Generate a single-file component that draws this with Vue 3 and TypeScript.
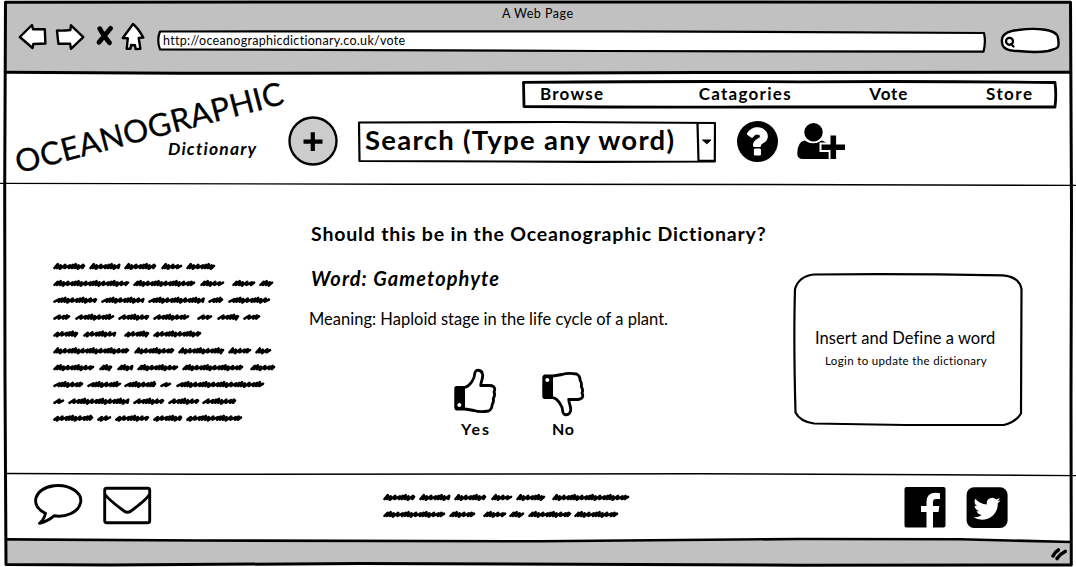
<script setup lang="ts">
// Spreads the letters of a line so that it fills the given width in pixels.
const vFit = {
  mounted(el: HTMLElement, binding: { value: number }) {
    const count = (el.textContent ?? '').length
    const natural = el.getBoundingClientRect().width
    el.style.letterSpacing = `${(binding.value - natural) / Math.max(1, count - 1)}px`
    el.style.width = `${binding.value}px`
  },
}

type Word = [number, number]

const nav = [
  { label: 'Browse', width: 63 },
  { label: 'Catagories', width: 92 },
  { label: 'Vote', width: 38 },
  { label: 'Store', width: 46 },
]

const sideLines: Word[][] = [
  [[1, 32], [37, 67], [72, 103], [109, 129], [134, 162]],
  [[1, 76], [81, 142], [148, 171], [180, 202], [207, 220]],
  [[1, 44], [49, 91], [96, 151], [156, 170], [176, 217]],
  [[1, 17], [23, 61], [66, 96], [101, 136], [145, 159], [165, 186], [191, 207]],
  [[1, 25], [31, 63], [72, 96], [101, 148]],
  [[1, 76], [82, 121], [126, 171], [176, 198], [203, 218]],
  [[1, 41], [47, 59], [65, 80], [85, 125], [130, 190], [198, 222]],
  [[1, 30], [35, 68], [72, 103], [108, 118], [124, 211]],
  [[1, 11], [16, 76], [81, 111], [116, 146], [150, 183]],
  [[1, 40], [45, 58], [63, 96], [101, 129], [134, 189]],
]

const footLines: Word[][] = [
  [[1, 32], [37, 67], [72, 103], [109, 129], [134, 162], [170, 246]],
  [[1, 62], [67, 92], [101, 123], [127, 141], [146, 188], [192, 235]],
]

function scribble(words: Word[], row: number): string {
  const y = 7.4 + row * 16.85
  let d = ''
  words.forEach(([from, to], w) => {
    let x = from + 0.5
    let i = 0
    d += `M${x} ${y + 1.6}`
    while (x < to - 5) {
      const k = (i * 7 + w * 5 + row * 3) % 5
      const rise = k === 0 ? 2.2 : k < 3 ? 1 : 1.5
      const run = k === 4 || k === 1 ? 5 : 3.3
      d += `L${(x + run).toFixed(1)} ${(y - rise).toFixed(1)}`
      d += `L${(x + run - 0.8).toFixed(1)} ${(y + (k === 2 ? 2.4 : 1.6)).toFixed(1)}`
      x += run - 0.4
      i++
    }
    d += `L${to - 1} ${y - 0.6}`
  })
  return d
}
</script>

<template>
  <div class="window">
    <div class="browser">
      <div class="title"><span v-fit="71">A Web Page</span></div>
      <div class="toolbar">
        <svg class="buttons" width="130" height="32" viewBox="17 21 130 32">
          <g class="outlined">
            <path d="M19.8 37L32 25L33 29.2L44.8 29.3L45.4 43.5L33.3 44L32.5 48Z" />
            <path d="M57 30.5Q63 31 70.3 30L71 25.3L83.3 37.2L71 48.8L70 43.6L58.4 43.8Z" />
            <path d="M133 24Q138 28 143.3 37.5L138.7 38L140.4 48.7L135.6 49L135 45.3L131 45L130.5 48.8L126.7 48.8L127.8 38.2L122.8 38Z" />
          </g>
          <path class="cross" d="M99.8 28.7Q103 35 109.5 42.8M110.6 28.3Q105 35 99 42.300" />
        </svg>
        <div class="address">
          <svg class="shape" width="832" height="25" viewBox="156 29 832 25">
            <path d="M160 31.5Q400 32 620 31.3L984 33Q986 42 983.5 51.7L600 51Q400 50 160 49.3Q156.500 40 160 31.5Z" />
          </svg>
          <span v-fit="242">http://oceanographicdictionary.co.uk/vote</span>
        </div>
        <svg class="quick" width="62" height="28" viewBox="999 27 62 28">
          <path class="pill" d="M1002 42C1001 35 1007 31 1018 30C1033 28 1057 28 1058 38C1060 50 1057 48 1048 51C1036 53 1029 52 1018 51C1007 51 1002 48 1002 42Z" />
          <circle class="lens" cx="1009.5" cy="41.300" r="3.5" />
          <path class="lens" d="M1011 44L1013.500 46.500" />
        </svg>
      </div>
    </div>

    <header class="header">
      <div class="brand">
        <svg class="brand-art" width="288" height="108" viewBox="0 75 288 108">
          <text class="brand-name" transform="translate(18.500 173.500) rotate(-14.7)" x="0" y="0" textLength="276">OCEANOGRAPHIC</text>
        </svg>
        <span class="brand-sub" v-fit="88">Dictionary</span>
      </div>
      <div class="header-side">
        <nav class="nav">
          <svg class="shape" width="536" height="30" viewBox="522 79 536 30">
            <path class="thick" d="M523.500 82.300Q700 81 800 81.800Q930 81 1055 82.500Q1056.500 95 1055 107L760 107Q640 107.500 524 106.500Z" />
          </svg>
          <a v-for="item in nav" :key="item.label" v-fit="item.width">{{ item.label }}</a>
        </nav>
        <div class="tools">
          <svg width="50" height="50" viewBox="288 116 50 50">
            <circle class="add" cx="313" cy="141" r="23.500" />
            <path class="plus" d="M303.500 141.700H322.500M312.800 132.200V151" />
          </svg>
          <div class="search">
            <svg class="shape" width="359" height="44" viewBox="357 120 359 44">
              <path d="M359 122.500L560 122L715 123L714.800 161.500L590 161.800L359.500 161Z" />
              <path d="M697.500 123L698.500 161M698.500 160.800H714" />
              <path class="caret" d="M702.500 140H711L706.800 143.800Z" />
            </svg>
            <span v-fit="309">Search (Type any word)</span>
          </div>
          <svg class="help" width="41" height="41" viewBox="128 128 1536 1536">
            <circle cx="896" cy="896" r="768" />
            <path class="mark" d="M896 1376v-160q0-14-9-23t-23-9h-160q-14 0-23 9t-9 23v160q0 14 9 23t23 9h160q14 0 23-9t9-23zM1152 704q0-88-55.500-163t-138.500-116t-170-41q-243 0-371 213q-15 24 8 42l132 100q7 6 19 6q16 0 25-12q53-68 86-92q34-24 86-24q48 0 85.500 26t37.500 59q0 38-20 61t-68 45q-63 28-115.500 86.500t-52.500 125.500v36q0 14 9 23t23 9h192q14 0 23-9t9-23q0-19 21.500-49.500t54.500-49.500q32-18 49-28.500t46-35t44.500-48t28-60.500t12.500-81z" transform="translate(110 -5)" />
          </svg>
          <svg class="user" width="50" height="42" viewBox="796 121 50 42">
            <path d="M804.500 141.500Q813 147 822 141.500Q829 144 829.500 152V160H803Q797 160 797.300 154Q797.500 143 804.500 141.500Z" />
            <circle cx="813.500" cy="133.300" r="9.200" />
            <path class="halo" d="M819.500 148.300H845M833.300 136.500V160" />
            <path class="badge" d="M821.500 148.300H845M833.300 136.500V160" />
          </svg>
        </div>
      </div>
    </header>

    <main class="main">
      <svg class="notes" width="228" height="172" viewBox="0 0 228 172">
        <path v-for="(line, i) in sideLines" :key="i" class="scribble" :d="scribble(line, i)" />
      </svg>
      <section class="entry">
        <h1><span v-fit="455">Should this be in the Oceanographic Dictionary?</span></h1>
        <h2><span v-fit="188">Word: Gametophyte</span></h2>
        <p><span v-fit="359">Meaning: Haploid stage in the life cycle of a plant.</span></p>
        <div class="votes">
          <div class="vote">
            <svg width="44" height="50" viewBox="453 367 44 50">
              <path d="M454.300 388Q454.500 386 456.500 386H465V410.500H456.500Q454.500 410 454.300 408Z" />
              <circle class="stud" cx="459.300" cy="405" r="2" />
              <path class="hand" d="M465 387.500C470 386 474.500 379 474.700 374C475 368.500 481.500 369.500 482.500 374C483.500 378 481 381 480.700 385.500H490C495 386 495.500 389 494 392Q495.500 395 493.300 398.500Q494 402 492.200 404.500Q492 409.500 488.500 411Q480 412.500 474 410.500L465 409" />
            </svg>
            <span v-fit="28">Yes</span>
          </div>
          <div class="vote">
            <svg width="44" height="50" viewBox="453 367 44 50">
              <g transform="matrix(1 0 0 -1 0 785)">
                <path d="M454.300 388Q454.500 386 456.500 386H465V410.500H456.500Q454.500 410 454.300 408Z" />
                <circle class="stud" cx="459.300" cy="405" r="2" />
                <path class="hand" d="M465 387.500C470 386 474.500 379 474.700 374C475 368.500 481.500 369.500 482.500 374C483.500 378 481 381 480.700 385.500H490C495 386 495.500 389 494 392Q495.500 395 493.300 398.500Q494 402 492.200 404.500Q492 409.500 488.500 411Q480 412.500 474 410.500L465 409" />
              </g>
            </svg>
            <span v-fit="22">No</span>
          </div>
        </div>
      </section>
      <aside class="card">
        <svg class="shape" width="232" height="156" viewBox="792 272 232 156">
          <path d="M814 274.500Q900 273.500 1003 275.300Q1019 276.500 1021.500 289L1021 413.500Q1016 422 1004 425H905L814 423.500Q800 421.500 795.500 412.500Q793.500 340 795 289Q799 276 814 274.500Z" />
        </svg>
        <strong v-fit="180">Insert and Define a word</strong>
        <small v-fit="162">Login to update the dictionary</small>
      </aside>
    </main>

    <footer class="footer">
      <div class="contact">
        <svg width="50" height="44" viewBox="33 482 50 44">
          <path class="line" d="M45.500 513.300C29 506 34 488 54 485.700C70 484 83 493 80.500 503C78 513 65 517.500 54 515.800Q48 521 39.500 523.300Q44 520 45.500 513.300Z" />
        </svg>
        <svg width="50" height="40" viewBox="102 485 50 40">
          <rect class="line" x="104.700" y="488.300" width="45" height="34.500" rx="2" />
          <path class="line" d="M105 494.500Q109 500 124 511Q127.500 513.500 131 511Q146 500 149.500 494.500" />
        </svg>
      </div>
      <svg class="legal" width="250" height="36" viewBox="0 0 250 36">
        <path v-for="(line, i) in footLines" :key="i" class="scribble" :d="scribble(line, i)" />
      </svg>
      <div class="social">
        <svg width="42" height="42" viewBox="904 486 42 42">
          <path d="M906.500 487H943.500Q945.500 487 945.500 489V525.500Q945.500 527.600 943.500 527.600H933V512H938.500L939.300 506H933V502Q933 499 936 499H940V493.200Q926.500 491 926.500 502V506H921V512H926.500V527.600H906.500Q904.500 527.600 904.500 525.500V489Q904.500 487 906.500 487Z" />
        </svg>
        <svg width="42" height="42" viewBox="966 486 42 42">
          <rect x="966.600" y="487.300" width="41" height="40.700" rx="7.500" />
          <path class="bird" transform="translate(971.600 493.300) scale(0.0172)" d="M1684 408q-67 98-162 167 1 14 1 42 0 130-38 259.500t-115.500 248.500-184.500 210.500-258 146-323 54.500q-271 0-496-145 35 4 78 4 225 0 401-138-105-2-188-64.500t-114-159.500q33 5 61 5 43 0 85-11-112-23-185.500-111.500t-73.500-205.500v-4q68 38 146 41-66-44-105-115t-39-154q0-88 44-163 121 149 294.500 238.500t371.500 99.500q-8-38-8-74 0-134 94.500-228.500t228.500-94.500q140 0 236 102 109-21 205-78-37 115-142 178 93-10 186-50z" />
        </svg>
      </div>
    </footer>

    <div class="status"></div>

    <svg class="frame" width="1076" height="567" viewBox="0 0 1076 567">
      <path class="fill" d="M7 541L600 540.500L960 540L1070 543V564H7Z" />
      <path class="outline" d="M5.500 2.200L560 2L1070.500 2.300L1071.500 210L1071 400L1071.300 565L800 565.200L360 563.500L110 565L6 564.500L5 380L4.700 190Z" />
      <path class="outline" d="M6 72.300L180 73.200L560 73L700 72.500L1071 72.300" />
      <path class="rule" d="M0 183.400L400 184.200L760 184.500L1076 185.400" />
      <path class="rule" d="M6 473.500L200 474.300L700 473.800L940 474.800L1076 475.600" />
      <path class="outline thin" d="M6 539.400L200 540.500L540 541.300L800 539L960 539.300L1071 542" />
      <path class="grip" d="M1053 556Q1055 552 1058.300 550M1057 558.500Q1060 554 1065.200 551.500" />
    </svg>
  </div>
</template>

<style>
body {
  background: #fff;
}
</style>

<style scoped>
.window {
  position: relative;
  width: 1076px;
  height: 567px;
  overflow: hidden;
  display: grid;
  grid-template-rows: 73px 111px 290px 67px 26px;
  font-family: Lato, "Open Sans", sans-serif;
  color: #000;
  background: #fff;
}
.window svg {
  display: block;
  flex: none;
}
span, a, strong, small {
  display: inline-block;
  white-space: nowrap;
}
.shape {
  position: absolute;
  left: 0;
  top: 0;
  fill: #fff;
  stroke: #000;
  stroke-width: 2.2;
  stroke-linejoin: round;
}
.shape .caret {
  fill: #000;
  stroke-width: 1;
}
.shape .thick {
  stroke-width: 2.8;
}
.frame {
  position: absolute;
  left: 0;
  top: 0;
  pointer-events: none;
  fill: none;
  stroke: #000;
}
.fill {
  fill: #c1c1c1;
  stroke: none;
}
.outline {
  stroke-width: 3;
  stroke-linejoin: round;
}
.thin {
  stroke-width: 2.6;
}
.rule {
  stroke-width: 1.4;
}
.grip {
  stroke-width: 3.6;
  stroke-linecap: round;
}
.browser {
  margin: 2px 5px 0 6px;
  padding-top: 2px;
  background: #c1c1c1;
}
.title {
  height: 19px;
  padding-left: 496px;
  font-size: 12.5px;
  line-height: 19px;
}
.toolbar {
  display: flex;
  align-items: flex-start;
  padding-left: 11px;
}
.buttons {
  margin-top: -2px;
}
.outlined {
  fill: #fff;
  stroke: #000;
  stroke-width: 2.4;
  stroke-linejoin: round;
}
.cross {
  fill: none;
  stroke: #000;
  stroke-width: 4.8;
  stroke-linecap: round;
}
.address {
  position: relative;
  width: 832px;
  height: 25px;
  margin: 6px 11px 0 9px;
  padding-left: 7px;
  box-sizing: border-box;
  font-size: 12.5px;
  line-height: 23px;
}
.address span, .nav a, .search span, .card strong, .card small {
  position: relative;
}
.quick {
  margin-top: 4px;
}
.pill {
  fill: #fff;
  stroke: #000;
  stroke-width: 2.4;
}
.lens {
  fill: none;
  stroke: #000;
  stroke-width: 2.3;
  stroke-linecap: round;
}
.header {
  display: flex;
}
.brand {
  width: 288px;
  padding-top: 2px;
  box-sizing: border-box;
}
.brand-art {
  overflow: visible;
}
.brand-name {
  font-size: 31.5px;
  stroke: #000;
  stroke-width: 0.3;
}
.brand-sub {
  display: block;
  width: max-content;
  margin: -45px 0 0 168px;
  font-size: 17.5px;
  line-height: 22px;
  font-style: italic;
  font-weight: 700;
}
.header-side {
  width: 770px;
}
.nav {
  position: relative;
  display: flex;
  justify-content: space-between;
  width: 536px;
  height: 30px;
  margin: 6px 0 7px 234px;
  padding: 0 26px 0 18px;
  box-sizing: border-box;
  font-size: 17px;
  line-height: 29px;
  font-weight: 700;
}
.nav a:nth-of-type(2) {
  margin-left: 17px;
}
.tools {
  display: flex;
  align-items: center;
  height: 50px;
}
.add {
  fill: #ccc;
  stroke: #000;
  stroke-width: 2.4;
}
.plus {
  stroke: #000;
  stroke-width: 4.2;
}
.search {
  position: relative;
  width: 359px;
  height: 44px;
  margin: 2px 21px 0 19px;
  padding-left: 8px;
  box-sizing: border-box;
  font-size: 27.5px;
  line-height: 39px;
  font-weight: 700;
}
.mark {
  fill: #fff;
  stroke: #fff;
  stroke-width: 40;
}
.user {
  margin-left: 18px;
}
.halo {
  stroke: #fff;
  stroke-width: 9.4;
}
.badge {
  stroke: #000;
  stroke-width: 5.6;
}
.main {
  display: flex;
  align-items: flex-start;
}
.notes {
  margin: 75px 29px 0 53px;
}
.scribble {
  fill: none;
  stroke: #000;
  stroke-width: 2.6;
  stroke-linejoin: round;
  stroke-linecap: round;
}
.entry {
  width: 482px;
  padding-top: 38px;
}
h1, h2, p {
  margin: 0;
}
h1 {
  height: 44px;
  padding-left: 1px;
  font-size: 19.5px;
  line-height: 24px;
}
h2 {
  height: 41px;
  padding-left: 1px;
  font-size: 20px;
  line-height: 24px;
  font-style: italic;
}
p {
  height: 60px;
  margin-left: -1px;
  font-size: 16.5px;
  line-height: 24px;
}
.votes {
  display: flex;
  gap: 44px;
  padding-left: 143px;
}
.vote {
  display: flex;
  flex-direction: column;
  align-items: center;
  width: 44px;
  font-size: 16px;
  line-height: 22px;
  font-weight: 700;
}
.vote span {
  margin-top: 1px;
}
.stud {
  fill: #fff;
}
.hand {
  fill: #fff;
  stroke: #000;
  stroke-width: 2.8;
  stroke-linejoin: round;
}
.card {
  position: relative;
  display: flex;
  flex-direction: column;
  align-items: center;
  width: 232px;
  height: 156px;
  margin-top: 88px;
  padding: 55px 6px 0 0;
  box-sizing: border-box;
}
.card strong {
  font-size: 16.5px;
  line-height: 22px;
  font-weight: 400;
}
.card small {
  margin: 2px 0 0 2px;
  font-size: 11.5px;
  line-height: 20px;
}
.footer {
  display: flex;
  align-items: flex-start;
  padding: 8px 68px 0 33px;
}
.contact {
  display: flex;
  gap: 19px;
}
.contact svg + svg {
  margin-top: 3px;
}
.legal {
  margin: 8px 0 0 231px;
}
.line {
  fill: none;
  stroke: #000;
  stroke-width: 2.9;
  stroke-linejoin: round;
}
.social {
  display: flex;
  gap: 20px;
  margin-left: auto;
  padding-top: 4px;
}
.bird {
  fill: #fff;
}
.status {
  background: #fff;
}
</style>
